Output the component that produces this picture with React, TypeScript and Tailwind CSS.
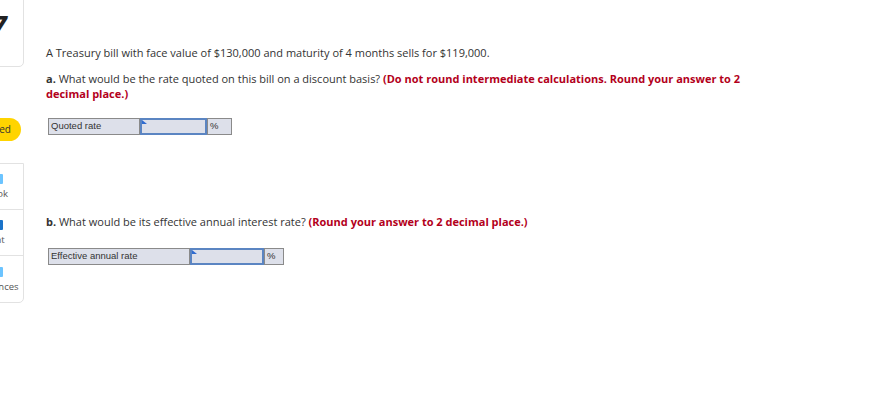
import React from "react";

const font = { fontFamily: "'Open Sans', Lato, sans-serif" };
const labelFont = { fontFamily: "'Liberation Sans', Arial, sans-serif" };

function AnswerRow({ label, labelW, inputW, unitW }: { label: string; labelW: string; inputW: string; unitW: string }) {
  return (
    <div className="flex h-[17px] text-[9.5px] text-[#333]" style={labelFont}>
      <div className={`${labelW} flex items-center border border-[#8a8a8a] bg-[#dde0ea] pl-[2px]`}>{label}</div>
      <div className={`${inputW} relative border-2 border-[#5b85c2] bg-[#dde0ea]`}>
        <div className="absolute left-0 top-0 h-0 w-0 border-l-[5px] border-t-[4px] border-l-[#2f6bd0] border-t-transparent" />
      </div>
      <div className={`${unitW} flex items-center border border-[#8a8a8a] bg-[#dde0ea] pl-[2px]`}>%</div>
    </div>
  );
}

function SideItem({ bar, text, last }: { bar: string; text: string; last?: boolean }) {
  return (
    <div className={`flex h-[46px] flex-col items-center justify-center gap-[4px] pl-[4px] ${last ? "" : "border-b border-[#e2e2e2]"}`}>
      <div className={`h-[10px] w-[17px] rounded-[1px] ${bar}`} />
      <span className="text-[9.5px] leading-[11px] text-[#555]">{text}</span>
    </div>
  );
}

export default function App() {
  return (
    <div className="flex h-[415px] w-[890px] overflow-hidden bg-white" style={font}>
      {/* left sidebar remnants */}
      <div className="ml-[-40px] flex w-[64px] shrink-0 flex-col">
        <div className="mt-[-10px] flex h-[77px] items-center justify-end rounded-br-[5px] border border-[#e2e2e2] pb-[6px] pr-[15px]">
          <span className="text-[24px] font-black italic leading-none text-[#222]" style={{ fontFamily: "'DejaVu Sans', sans-serif" }}>7</span>
        </div>
        <div className="ml-[-10px] mt-[51px] flex h-[23px] w-[71px] items-center justify-end rounded-full bg-[#ffd400] pr-[10px] text-[10px] text-[#333]">Saved</div>
        <div className="mt-[22px] flex flex-col rounded-br-[5px] border border-[#e2e2e2]">
          <SideItem bar="bg-[#6cc4ff]" text="eBook" />
          <SideItem bar="bg-[#1a73c9]" text="Print" />
          <SideItem bar="bg-[#6cc4ff]" text="References" last />
        </div>
      </div>

      {/* main content */}
      <div className="ml-[22px] mt-[45px] w-[702px] text-[11px] text-[#333]">
        <p className="leading-[15px]">A Treasury bill with face value of $130,000 and maturity of 4 months sells for $119,000.</p>
        <p className="mt-[11px] leading-[15px]">
          <b className="font-bold">a.</b> What would be the rate quoted on this bill on a discount basis?{" "}
          <b className="font-bold text-[#b3001b]">(Do not round intermediate calculations. Round your answer to 2 decimal place.)</b>
        </p>
        <div className="ml-[2px] mt-[17px]">
          <AnswerRow label="Quoted rate" labelW="w-[92px]" inputW="w-[67px]" unitW="w-[25px]" />
        </div>
        <p className="mt-[79px] leading-[15px]">
          <b className="font-bold">b.</b> What would be its effective annual interest rate?{" "}
          <b className="font-bold text-[#b3001b]">(Round your answer to 2 decimal place.)</b>
        </p>
        <div className="ml-[2px] mt-[19px]">
          <AnswerRow label="Effective annual rate" labelW="w-[142px]" inputW="w-[74px]" unitW="w-[20px]" />
        </div>
      </div>
    </div>
  );
}
